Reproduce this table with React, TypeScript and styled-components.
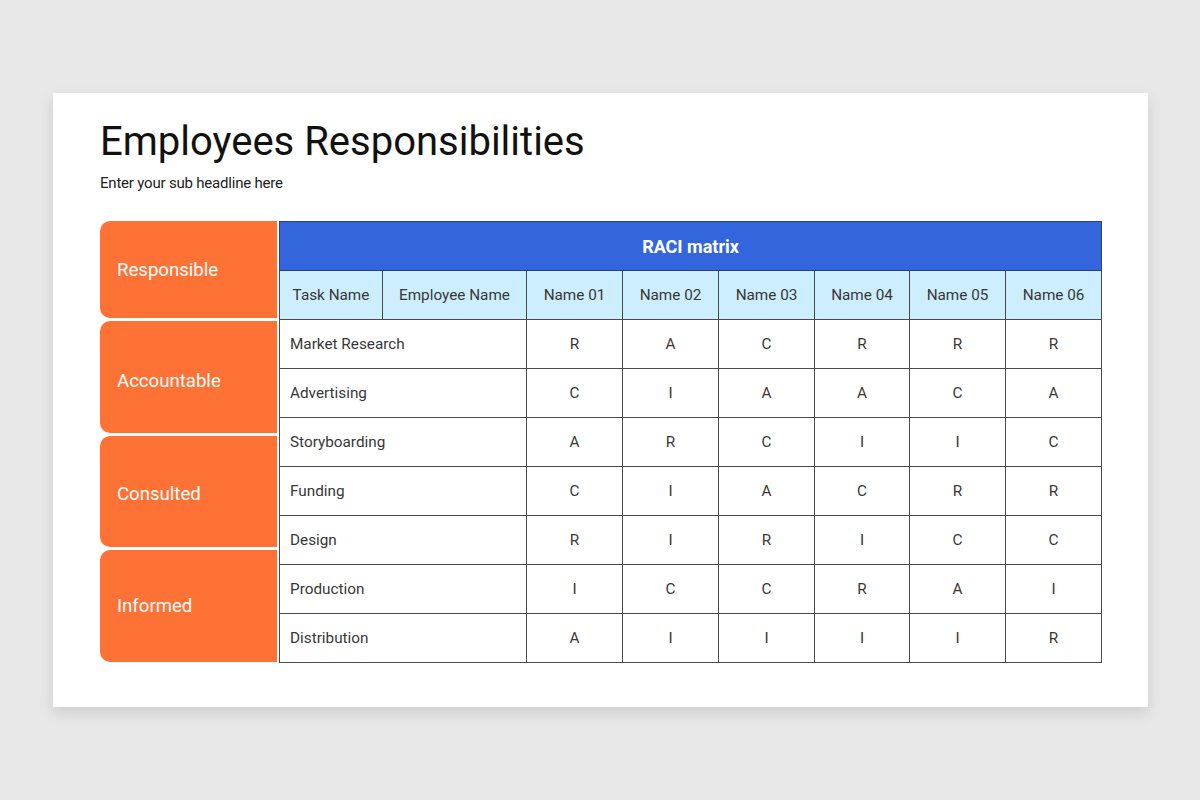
import React from 'react';
import styled, { createGlobalStyle } from 'styled-components';

const GlobalStyle = createGlobalStyle`
  html, body {
    margin: 0;
    padding: 0;
    background: #e9e8e9;
    font-family: Roboto, "Noto Sans", "Liberation Sans", sans-serif;
  }
`;

const Page = styled.div`
  width: 1200px;
  height: 800px;
  padding: 93px 0 0 53px;
  box-sizing: border-box;
`;

const Slide = styled.div`
  width: 1095px;
  height: 614px;
  background: #fff;
  box-shadow: 0 6px 14px rgba(0, 0, 0, 0.12);
  padding: 20px 40px 0 47px;
  box-sizing: border-box;
`;

const Title = styled.h1`
  margin: 0;
  font-size: 40px;
  line-height: 58px;
  font-weight: 400;
  color: #111;
`;

const Subtitle = styled.p`
  margin: 2px 0 0;
  font-size: 15px;
  line-height: 20px;
  color: #222;
  letter-spacing: -0.2px;
`;

const Body = styled.div`
  display: flex;
  gap: 2px;
  margin-top: 28px;
`;

const Labels = styled.div`
  display: flex;
  flex-direction: column;
  flex: none;
  gap: 3px;
  width: 177px;
`;

const Label = styled.div<{ $h: number; $dy: number }>`
  height: ${({ $h }) => $h}px;
  background: #fe7235;
  border-radius: 10px 0 0 10px;
  display: flex;
  align-items: center;
  padding: ${({ $dy }) => $dy * 2}px 0 0 17px;
  box-sizing: border-box;
  color: #fff;
  font-size: 18.6px;
`;

const Table = styled.table`
  flex: none;
  border-collapse: collapse;
  table-layout: fixed;
  width: 822px;
  font-size: 15.3px;
  color: #383838;
`;

const Cell = styled.td<{ $left?: boolean }>`
  border: 1px solid #4a4a4a;
  height: 49px;
  padding: 0 ${({ $left }) => ($left ? '10px' : '0')};
  text-align: ${({ $left }) => ($left ? 'left' : 'center')};
  box-sizing: border-box;
  white-space: nowrap;
`;

const HeadCell = styled(Cell).attrs({ as: 'th' })`
  background: #cdeefe;
  font-weight: 400;
  color: #383838;
  text-align: center;
  padding: 0;
`;

const Banner = styled.th`
  background: #3366dd;
  color: #fff;
  font-size: 18px;
  font-weight: 700;
  height: 49px;
  padding: 0;
  box-sizing: border-box;
  border: 1px solid #2a3f8a;
`;

const names = ['Name 01', 'Name 02', 'Name 03', 'Name 04', 'Name 05', 'Name 06'];

const rows: [string, string[]][] = [
  ['Market Research', ['R', 'A', 'C', 'R', 'R', 'R']],
  ['Advertising', ['C', 'I', 'A', 'A', 'C', 'A']],
  ['Storyboarding', ['A', 'R', 'C', 'I', 'I', 'C']],
  ['Funding', ['C', 'I', 'A', 'C', 'R', 'R']],
  ['Design', ['R', 'I', 'R', 'I', 'C', 'C']],
  ['Production', ['I', 'C', 'C', 'R', 'A', 'I']],
  ['Distribution', ['A', 'I', 'I', 'I', 'I', 'R']],
];

// label, box height, downward nudge of the text
const labels: [string, number, number][] = [
  ['Responsible', 97, 0],
  ['Accountable', 112, 4],
  ['Consulted', 111, 2],
  ['Informed', 112, 0],
];

const colWidths = [103, 144, 96, 96, 96, 95, 96, 96];

export default function App() {
  return (
    <>
      <GlobalStyle />
      <Page>
        <Slide>
          <Title>Employees Responsibilities</Title>
          <Subtitle>Enter your sub headline here</Subtitle>
          <Body>
            <Labels>
              {labels.map(([text, h, dy]) => (
                <Label key={text} $h={h} $dy={dy}>
                  {text}
                </Label>
              ))}
            </Labels>
            <Table>
              <colgroup>
                {colWidths.map((w, i) => (
                  <col key={i} style={{ width: w }} />
                ))}
              </colgroup>
              <thead>
                <tr>
                  <Banner colSpan={8}>RACI matrix</Banner>
                </tr>
                <tr>
                  <HeadCell>Task Name</HeadCell>
                  <HeadCell>Employee Name</HeadCell>
                  {names.map((n) => (
                    <HeadCell key={n}>{n}</HeadCell>
                  ))}
                </tr>
              </thead>
              <tbody>
                {rows.map(([task, vals]) => (
                  <tr key={task}>
                    <Cell $left colSpan={2}>
                      {task}
                    </Cell>
                    {vals.map((v, i) => (
                      <Cell key={i}>{v}</Cell>
                    ))}
                  </tr>
                ))}
              </tbody>
            </Table>
          </Body>
        </Slide>
      </Page>
    </>
  );
}
